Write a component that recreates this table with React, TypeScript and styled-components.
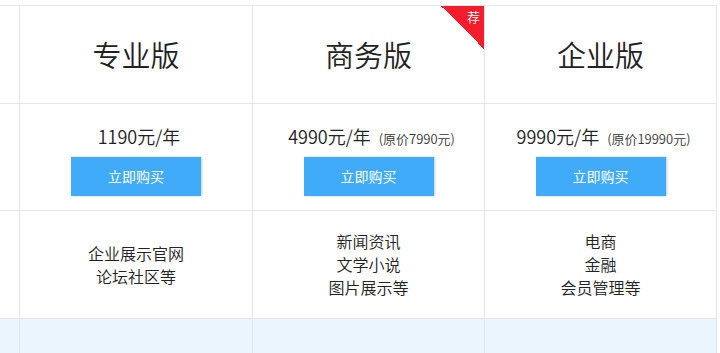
import styled, { createGlobalStyle } from "styled-components";

const GlobalStyle = createGlobalStyle`
  html, body {
    margin: 0;
    padding: 0;
    background: #ffffff;
  }
  body {
    font-family: "Noto Sans CJK SC", "Liberation Sans", sans-serif;
    font-weight: 350;
    color: #222222;
  }
`;

const PriceTable = styled.div`
  display: grid;
  grid-template-columns: 20px 233px 232px 232px;
  grid-template-rows: 98px 107px 108px 40px;
  margin-top: 5px;
  border-top: 1px solid #e6e6e6;
  width: 717px;
  overflow: hidden;
`;

const Cell = styled.div<{ $tint?: boolean }>`
  position: relative;
  box-sizing: border-box;
  display: flex;
  flex-direction: column;
  align-items: center;
  justify-content: center;
  border-right: 1px solid ${({ $tint }) => ($tint ? "#dfe8ef" : "#e6e6e6")};
  border-bottom: 1px solid ${({ $tint }) => ($tint ? "#dfe8ef" : "#e6e6e6")};
  background: ${({ $tint }) => ($tint ? "#eaf5fe" : "#ffffff")};
`;

const PlanName = styled.div`
  font-size: 29px;
  color: #222222;
  line-height: 1;
`;

/* red corner flag on the recommended plan */
const Ribbon = styled.div`
  position: absolute;
  top: 0;
  right: 0;
  width: 43px;
  height: 43px;
  background: linear-gradient(to bottom left, #f51d2c 50%, transparent 50%);
`;

const RibbonText = styled.span`
  position: absolute;
  top: 4px;
  right: 4px;
  font-size: 13px;
  line-height: 1;
  color: #ffffff;
`;

const PriceLine = styled.div`
  display: flex;
  align-items: baseline;
  gap: 8px;
  margin-top: 8px;
  padding-left: 6px;
`;

const Price = styled.span`
  font-size: 18px;
  color: #222222;
  line-height: 1;
`;

const OldPrice = styled.span`
  font-size: 13px;
  color: #333333;
  line-height: 1;
`;

const BuyButton = styled.button`
  margin-top: 12px;
  width: 130px;
  height: 39px;
  border: 0;
  padding: 0;
  background: #40abf8;
  color: #ffffff;
  font-family: inherit;
  font-weight: 400;
  font-size: 14px;
  cursor: pointer;
  box-shadow: 1px 0 2px rgba(40, 110, 170, 0.35);
`;

const Features = styled.div`
  font-size: 16px;
  line-height: 23px;
  color: #222222;
  text-align: center;
`;

interface Plan {
  name: string;
  price: string;
  oldPrice?: string;
  recommended?: boolean;
  features: string[];
}

const plans: Plan[] = [
  {
    name: "专业版",
    price: "1190元/年",
    features: ["企业展示官网", "论坛社区等"],
  },
  {
    name: "商务版",
    price: "4990元/年",
    oldPrice: "(原价7990元)",
    recommended: true,
    features: ["新闻资讯", "文学小说", "图片展示等"],
  },
  {
    name: "企业版",
    price: "9990元/年",
    oldPrice: "(原价19990元)",
    features: ["电商", "金融", "会员管理等"],
  },
];

export default function App() {
  return (
    <>
      <GlobalStyle />
      <PriceTable>
        <Cell />
        {plans.map((p) => (
          <Cell key={p.name}>
            <PlanName>{p.name}</PlanName>
            {p.recommended && (
              <Ribbon>
                <RibbonText>荐</RibbonText>
              </Ribbon>
            )}
          </Cell>
        ))}

        <Cell />
        {plans.map((p) => (
          <Cell key={p.name}>
            <PriceLine>
              <Price>{p.price}</Price>
              {p.oldPrice && <OldPrice>{p.oldPrice}</OldPrice>}
            </PriceLine>
            <BuyButton type="button">立即购买</BuyButton>
          </Cell>
        ))}

        <Cell />
        {plans.map((p) => (
          <Cell key={p.name}>
            <Features>
              {p.features.map((f) => (
                <div key={f}>{f}</div>
              ))}
            </Features>
          </Cell>
        ))}

        <Cell $tint />
        {plans.map((p) => (
          <Cell key={p.name} $tint />
        ))}
      </PriceTable>
    </>
  );
}
